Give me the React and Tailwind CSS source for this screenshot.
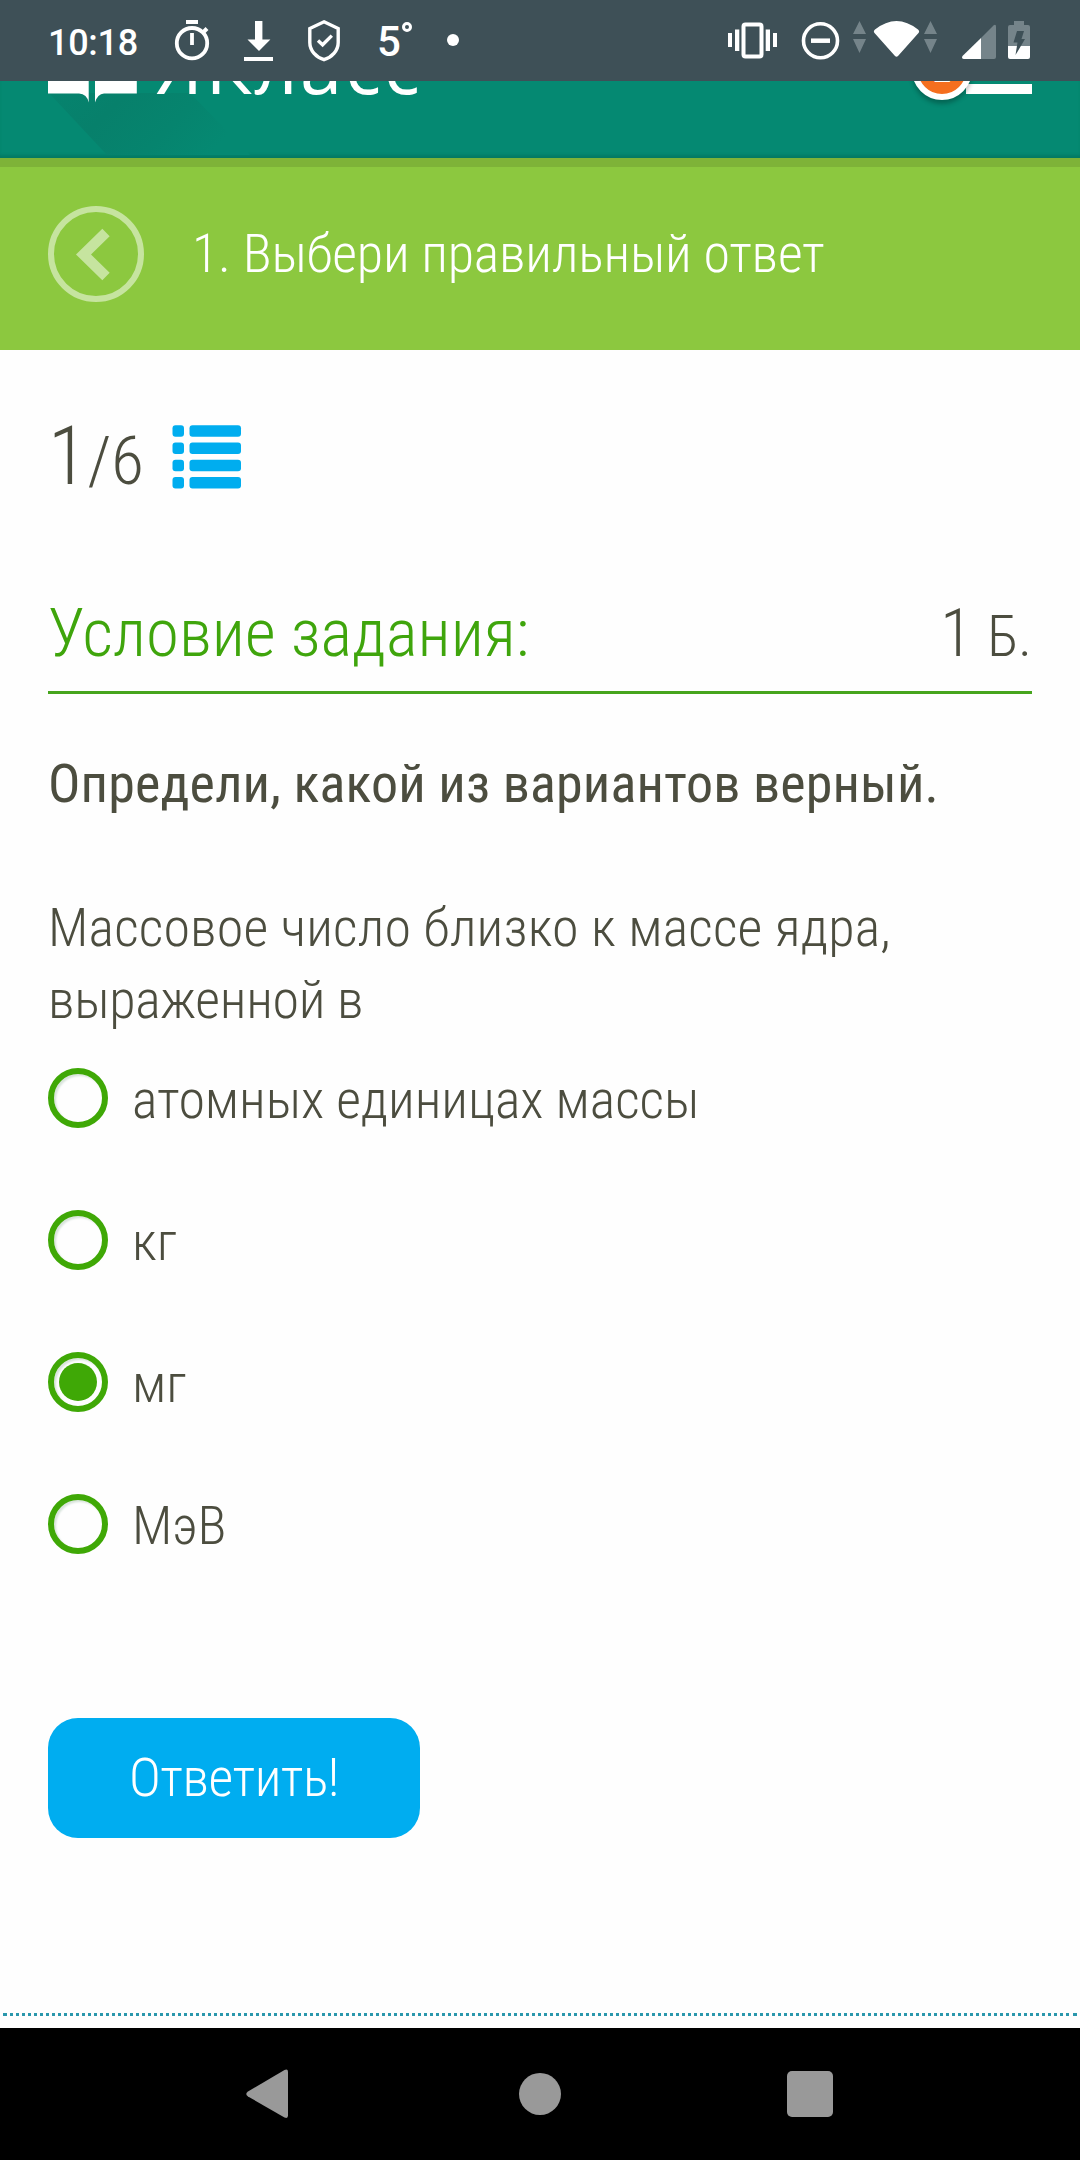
import React, { useState } from 'react';

const OPTIONS = ['атомных единицах массы', 'кг', 'мг', 'МэВ'];

const StatusBar = () => (
  <div className="relative z-10 flex h-[81px] w-full items-start bg-[#3e5057] font-['Roboto',sans-serif] text-white">
    <span className="ml-[48px] mt-[19px] w-[96px] whitespace-nowrap text-[36px] font-medium leading-[48px] tracking-[-0.3px]">10:18</span>

    {/* Timer */}
    <svg className="ml-[30px] mt-[19px] h-[44px] w-[38px] shrink-0" viewBox="174 19 38 44" fill="none" stroke="currentColor">
      <circle cx="192" cy="43.2" r="15.2" strokeWidth="3.8" />
      <path d="M186 22h12" strokeWidth="4" />
      <path d="M192 33v12" strokeWidth="3.8" />
      <path d="M202.500 33l4.500-4.500" strokeWidth="4" />
    </svg>

    {/* Download */}
    <svg className="ml-[31px] mt-[19px] h-[44px] w-[32px] shrink-0" viewBox="243 19 32 44" fill="currentColor">
      <path d="M255 21h7.400v18.500h8L259 51l-11.500-11.500h7.500zM244 57h29v4h-29z" />
    </svg>

    {/* Shield */}
    <svg className="ml-[32px] mt-[19px] h-[44px] w-[34px] shrink-0" viewBox="307 19 34 44" fill="none" stroke="currentColor" strokeWidth="3.400">
      <path d="M324 21.800L338.200 28.500V42.500c0 8-6 14.500-14.200 17.200c-8.200-2.700-14.200-9.200-14.200-17.200V28.500z" />
      <path d="M318 40.500l4.600 4.300l9.200-9.200" />
    </svg>

    <span className="ml-[36px] mt-[18px] w-[25px] whitespace-nowrap text-[42px] font-medium leading-[48px]">5</span>
    <span className="mt-[22px] h-[10px] w-[10px] rounded-full border-[3px] border-white" />
    <span className="ml-[35px] mt-[34px] h-[12px] w-[12px] rounded-full bg-white" />

    <div className="ml-auto mr-[48px] mt-[18px] flex h-[44px]">
      {/* Vibrate */}
      <svg className="h-[44px] w-[52px]" viewBox="727 18 52 44" fill="currentColor">
        <path d="M728 33h4v14h-4zM735 29.500h4.300v21.500H735zM765.700 29.500h4.300v21.500h-4.300zM773 33h4v14h-4z" />
        <rect x="743.500" y="24.500" width="18" height="32" rx="2" fill="none" stroke="currentColor" strokeWidth="4" />
      </svg>
      {/* Do not disturb */}
      <svg className="ml-[21px] h-[44px] w-[42px]" viewBox="800 18 42 44" fill="none" stroke="currentColor">
        <circle cx="820.500" cy="40.700" r="17" strokeWidth="3.600" />
        <path d="M811 40.700h19" strokeWidth="4.500" />
      </svg>
      {/* Wifi */}
      <svg className="ml-[10px] h-[44px] w-[86px]" viewBox="852 18 86 44" fill="currentColor">
        <path fill="#75848a" d="M859.500 21l6.500 13h-13zM859.500 53l6.500-14h-13zM930.500 21l6.500 13h-13zM930.500 53l6.500-14h-13z" />
        <path d="M875 29.500Q896.500 12.500 918 29.500Q920 31 918.500 33L898 56Q896.500 57.500 895 56L874.500 33Q873 31 875 29.500z" />
      </svg>
      {/* Signal */}
      <svg className="ml-[23px] h-[44px] w-[36px]" viewBox="961 18 36 44" fill="currentColor">
        <path fill="#75848a" d="M981 38L993.500 25.500Q996 23.700 996 27V57q0 2-2 2h-13z" />
        <path d="M981 38V59h-17q-3-.5-1.500-3z" />
      </svg>
      {/* Battery */}
      <svg className="ml-[10px] h-[44px] w-[25px]" viewBox="1007 18 25 44" fill="currentColor">
        <path fill="#75848a" d="M1014 21h10v4h4q2 0 2 2v19h-22V27q0-2 2-2h4z" />
        <path d="M1008 46h22v11q0 2-2 2h-18q-2 0-2-2z" />
        <path fill="#3e5057" d="M1017 31h7l-2.500 8h3.500l-9.500 16l2-12.500h-4z" />
      </svg>
    </div>
  </div>
);

const SiteHeader = () => (
  <header className="relative h-[77px] overflow-hidden bg-[#058972] shadow-[inset_0_-4px_3px_-1px_#047a63]">
    {/* Long shadow that the logo casts */}
    <svg className="absolute left-0 top-0 h-[77px] w-[300px]" viewBox="0 81 300 77">
      <defs>
        <linearGradient id="logoShadow" x1="0" y1="0" x2="1" y2="0.300">
          <stop offset="0" stopColor="#06836e" />
          <stop offset="0.350" stopColor="#07806b" />
          <stop offset="0.700" stopColor="#06846e" />
          <stop offset="1" stopColor="#058972" />
        </linearGradient>
      </defs>
      <path d="M49 93H190L250 155H107z" fill="url(#logoShadow)" />
    </svg>
    <div className="relative flex justify-between px-[48px]">
      <div className="flex items-start">
        <svg className="h-[22px] w-[90px]" viewBox="48 81 90 22" fill="#fff">
          <path d="M48 81h40.700v21.500Q87 94 79 93.500H48zM95 81h41.800v12.500H104Q97.500 94 95 102.500z" />
        </svg>
        <span className="-mt-[64px] ml-[17px] whitespace-nowrap font-['Open_Sans',sans-serif] text-[76px] font-medium leading-[96px] tracking-[2.4px] text-white">
          ЯКласс
        </span>
      </div>
      <div className="flex items-start">
        <span className="relative z-10 -mt-[41px] flex h-[60px] w-[60px] items-center justify-center rounded-full border-[6px] border-white bg-[#f56f1f] font-['Roboto',sans-serif] text-[32px] font-medium text-white shadow-[0_4px_4px_rgba(0,0,0,0.25)]">
          <span className="mt-[2px]">2</span>
        </span>
        <span className="-ml-[6px] mt-[3px] h-[10px] w-[66px] bg-white" />
      </div>
    </div>
  </header>
);

const TaskTitle = () => (
  <div className="flex h-[192px] items-start border-t-[9px] border-[#7eb338] bg-[#8cc83f] px-[48px] pt-[39px]">
    <button className="h-[96px] w-[96px] shrink-0">
      <svg viewBox="0 0 96 96" fill="none" stroke="#c6e49f">
        <circle cx="48" cy="48" r="45" strokeWidth="6" />
        <path d="M58 26.500L35.500 48.500L58 70.500" strokeWidth="10.500" />
      </svg>
    </button>
    <h1 className="ml-[48px] whitespace-nowrap text-[54px] leading-[96px] tracking-[-0.22px] text-white">1. Выбери правильный ответ</h1>
  </div>
);

const ListIcon = () => (
  <svg className="ml-[28px] mt-[16px] h-[64px] w-[70px]" viewBox="0 0 70 64" fill="#00adef">
    {[0.3, 17.5, 34.7, 51.9].map((y) => (
      <g key={y}>
        <rect x="0.500" y={y} width="11.500" height="11.500" rx="3" />
        <rect x="17.500" y={y} width="51.500" height="11.500" rx="3" />
      </g>
    ))}
  </svg>
);

const RadioOption = ({ label, checked, onSelect }) => (
  <button onClick={onSelect} className="flex h-[60px] items-start text-left">
    <span className="flex h-[60px] w-[60px] items-center justify-center rounded-full border-[6px] border-[#3fa806] shadow-[inset_2px_2px_2px_#d9e4dc]">
      {checked && <span className="h-[38px] w-[38px] rounded-full bg-[#3fa806]" />}
    </span>
    <span className="ml-[24px] whitespace-nowrap leading-[64px] tracking-[-0.07px]">{label}</span>
  </button>
);

const NavBar = () => (
  <nav className="flex h-[132px] items-center bg-black">
    <svg className="ml-[245px] h-[52px] w-[44px]" viewBox="245 2068 44 52" fill="#999">
      <path d="M248 2091.500L284.500 2070Q288 2068.500 288 2072V2115.500Q288 2119 284.500 2117.500L248 2096.500Q244.500 2094 248 2091.500z" />
    </svg>
    <span className="ml-[230px] h-[42px] w-[42px] rounded-full bg-[#999]" />
    <span className="ml-[226px] h-[46px] w-[46px] rounded-[5px] bg-[#999]" />
  </nav>
);

const App = () => {
  const [selected, setSelected] = useState(2);

  return (
    <div className="h-[2160px] w-[1080px] overflow-hidden bg-[#fefefe] font-['Roboto_Condensed','Roboto',sans-serif] text-[54px] font-light text-[#4c4d3f]">
      <StatusBar />
      <SiteHeader />
      <TaskTitle />

      <main className="flex h-[1663px] flex-col items-start px-[48px] pt-[59px]">
        <div className="flex h-[96px] items-start">
          <div className="flex items-baseline whitespace-nowrap leading-[96px]">
            <span className="text-[81px]">1</span>
            <span className="text-[67px]">/6</span>
          </div>
          <ListIcon />
        </div>

        <div className="mt-[88px] flex h-[101px] w-full items-baseline justify-between border-b-[3px] border-[#46a51d] leading-[80px]">
          <h2 className="whitespace-nowrap text-[67px] text-[#3fa50c]">Условие задания:</h2>
          <span className="whitespace-nowrap text-[66px]">
            1 <span className="text-[57px]">Б.</span>
          </span>
        </div>

        <p className="mt-[54px] whitespace-nowrap font-normal leading-[72px] tracking-[0.12px]">Определи, какой из вариантов верный.</p>
        <p className="mt-[72px] whitespace-nowrap leading-[72px]">
          <span className="tracking-[0.16px]">Массовое число близко к массе ядра,</span>
          <br />
          <span className="tracking-[-0.3px]">выраженной в</span>
        </p>

        <div className="mt-[32px] flex flex-col items-start gap-[82px]">
          {OPTIONS.map((label, i) => (
            <RadioOption key={label} label={label} checked={i === selected} onSelect={() => setSelected(i)} />
          ))}
        </div>

        <button className="mt-[164px] h-[120px] w-[372px] whitespace-nowrap rounded-[30px] bg-[#00adf0] pb-[2px] tracking-[-0.5px] text-white">
          Ответить!
        </button>
      </main>

      <div className="mx-[3px] mb-[12px] border-t-[3px] border-dotted border-[#2a97ac]" />
      <NavBar />
    </div>
  );
};

export default App;
